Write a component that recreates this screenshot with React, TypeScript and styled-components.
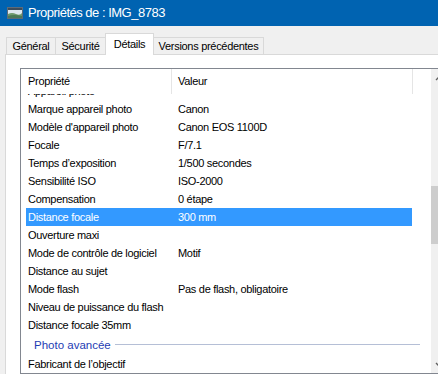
import React from 'react';
import styled, { createGlobalStyle } from 'styled-components';

const GlobalStyle = createGlobalStyle`
  html, body {
    margin: 0;
    padding: 0;
    background: #f0f0f0;
    overflow: hidden;
  }
  body {
    font-family: 'Liberation Sans', Arial, sans-serif;
    font-size: 11px;
    letter-spacing: -0.3px;
    color: #000000;
  }
`;

/* 창 전체 */
const Window = styled.div`
  width: 438px;
  height: 374px;
  display: flex;
  flex-direction: column;
  overflow: hidden;
  background: #f0f0f0;
`;

/* 타이틀 바 */
const TitleBar = styled.div`
  height: 26px;
  flex: 0 0 26px;
  background: #0063b1;
  display: flex;
  align-items: center;
  padding-left: 7px;
  gap: 5px;
  color: #ffffff;
  font-size: 13px;
  letter-spacing: -0.5px;
`;

const TitleText = styled.span`
  margin-top: -1px;
`;

/* 탭 */
const TabStrip = styled.div`
  display: flex;
  align-items: flex-end;
  padding-left: 6px;
  margin-top: 7px;
  margin-bottom: -1px;
  position: relative;
  z-index: 1;
`;

const Tab = styled.div<{ $active?: boolean; $w: number }>`
  box-sizing: border-box;
  width: ${(p) => p.$w}px;
  height: ${(p) => (p.$active ? 22 : 18)}px;
  margin-left: -1px;
  border: 1px solid #d9d9d9;
  border-bottom: ${(p) => (p.$active ? 'none' : '1px solid #d9d9d9')};
  background: ${(p) => (p.$active ? '#ffffff' : '#f0f0f0')};
  display: flex;
  align-items: center;
  justify-content: center;
  padding-bottom: ${(p) => (p.$active ? 2 : 0)}px;
  &:first-child {
    margin-left: 0;
  }
`;

/* 탭 패널 */
const Panel = styled.div`
  flex: 1;
  margin-left: 5px;
  width: 480px;
  background: #ffffff;
  border-top: 1px solid #d9d9d9;
  border-left: 1px solid #d9d9d9;
  padding: 13px 0 0 14px;
`;

/* 리스트 박스 */
const ListBox = styled.div`
  box-sizing: border-box;
  width: 429px;
  height: 306px;
  border: 1px solid #828790;
  display: flex;
`;

const ListMain = styled.div`
  width: 410px;
  display: flex;
  flex-direction: column;
`;

const Header = styled.div`
  height: 25px;
  flex: 0 0 25px;
  display: flex;
  background: #ffffff;
`;

const HeaderCell = styled.div<{ $w: number }>`
  box-sizing: border-box;
  width: ${(p) => p.$w}px;
  padding-left: ${(p) => (p.$w > 200 ? 6 : 7)}px;
  padding-bottom: 2px;
  border-right: 1px solid #e5e5e5;
  display: flex;
  align-items: center;
`;

const Viewport = styled.div`
  flex: 1;
  overflow: hidden;
`;

/* 스크롤된 상태: 첫 줄은 헤더 아래로 잘림 */
const Rows = styled.div`
  margin-top: -12px;
`;

const Row = styled.div<{ $selected?: boolean }>`
  height: 18px;
  margin-left: 5px;
  width: 386px;
  display: flex;
  align-items: center;
  background: ${(p) => (p.$selected ? '#3399ff' : 'transparent')};
  color: ${(p) => (p.$selected ? '#ffffff' : '#000000')};
  white-space: nowrap;
`;

const NameCell = styled.div`
  width: 146px;
  padding-left: 2px;
  box-sizing: border-box;
`;

const ValueCell = styled.div`
  padding-left: 6px;
`;

const GroupRow = styled.div`
  height: 21px;
  margin-left: 5px;
  width: 394px;
  display: flex;
  align-items: center;
  padding-left: 8px;
  box-sizing: border-box;
  gap: 4px;
  color: #1e3cb4;
  font-size: 11.5px;
  letter-spacing: 0;
`;

const GroupLine = styled.div`
  flex: 1;
  height: 1px;
  background: #b5bfd6;
`;

/* 스크롤바 */
const ScrollBar = styled.div`
  width: 17px;
  flex: 0 0 17px;
  background: #f0f0f0;
  display: flex;
  flex-direction: column;
`;

const ScrollButton = styled.div`
  height: 17px;
  flex: 0 0 17px;
  display: flex;
  align-items: center;
  justify-content: center;
`;

const ScrollTrack = styled.div`
  flex: 1;
  padding-top: 100px;
`;

const Thumb = styled.div`
  height: 58px;
  background: #cdcdcd;
`;

const PictureIcon = () => (
  <svg width="16" height="12" viewBox="0 0 16 12">
    <rect x="0.5" y="0.5" width="15" height="11" fill="#dfe8ee" stroke="#5d6b78" />
    <rect x="1" y="1" width="14" height="2" fill="#3d4d5c" />
    <path d="M1 7 Q5 5 9 7 T15 6 V11 H1 Z" fill="#6f9a6c" />
    <path d="M1 9 Q6 7 15 9 V11 H1 Z" fill="#4c7a55" />
  </svg>
);

const Chevron = ({ down }: { down?: boolean }) => (
  <svg width="9" height="6" viewBox="0 0 9 6">
    <path
      d={down ? 'M1 1 L4.5 4.5 L8 1' : 'M1 5 L4.5 1.5 L8 5'}
      fill="none"
      stroke="#606060"
      strokeWidth="1.4"
    />
  </svg>
);

const rows: { name: string; value: string; selected?: boolean }[] = [
  { name: 'Appareil photo', value: '' },
  { name: 'Marque appareil photo', value: 'Canon' },
  { name: "Modèle d'appareil photo", value: 'Canon EOS 1100D' },
  { name: 'Focale', value: 'F/7.1' },
  { name: 'Temps d’exposition', value: '1/500 secondes' },
  { name: 'Sensibilité ISO', value: 'ISO-2000' },
  { name: 'Compensation', value: '0 étape' },
  { name: 'Distance focale', value: '300 mm', selected: true },
  { name: 'Ouverture maxi', value: '' },
  { name: 'Mode de contrôle de logiciel', value: 'Motif' },
  { name: 'Distance au sujet', value: '' },
  { name: 'Mode flash', value: 'Pas de flash, obligatoire' },
  { name: 'Niveau de puissance du flash', value: '' },
  { name: 'Distance focale 35mm', value: '' },
];

const tabs = [
  { label: 'Général', w: 50 },
  { label: 'Sécurité', w: 51 },
  { label: 'Détails', w: 49, active: true },
  { label: 'Versions précédentes', w: 111 },
];

const App = (): JSX.Element => (
  <Window>
    <GlobalStyle />
    <TitleBar>
      <PictureIcon />
      <TitleText>Propriétés de : IMG_8783</TitleText>
    </TitleBar>

    <TabStrip>
      {tabs.map((t) => (
        <Tab key={t.label} $w={t.w} $active={t.active}>
          {t.label}
        </Tab>
      ))}
    </TabStrip>

    <Panel>
      <ListBox>
        <ListMain>
          <Header>
            <HeaderCell $w={151}>Propriété</HeaderCell>
            <HeaderCell $w={241}>Valeur</HeaderCell>
          </Header>
          <Viewport>
            <Rows>
              {rows.map((r) => (
                <Row key={r.name} $selected={r.selected}>
                  <NameCell>{r.name}</NameCell>
                  <ValueCell>{r.value}</ValueCell>
                </Row>
              ))}
              <GroupRow>
                <span>Photo avancée</span>
                <GroupLine />
              </GroupRow>
              <Row>
                <NameCell>Fabricant de l’objectif</NameCell>
              </Row>
            </Rows>
          </Viewport>
        </ListMain>
        <ScrollBar>
          <ScrollButton>
            <Chevron />
          </ScrollButton>
          <ScrollTrack>
            <Thumb />
          </ScrollTrack>
          <ScrollButton>
            <Chevron down />
          </ScrollButton>
        </ScrollBar>
      </ListBox>
    </Panel>
  </Window>
);

export default App;
